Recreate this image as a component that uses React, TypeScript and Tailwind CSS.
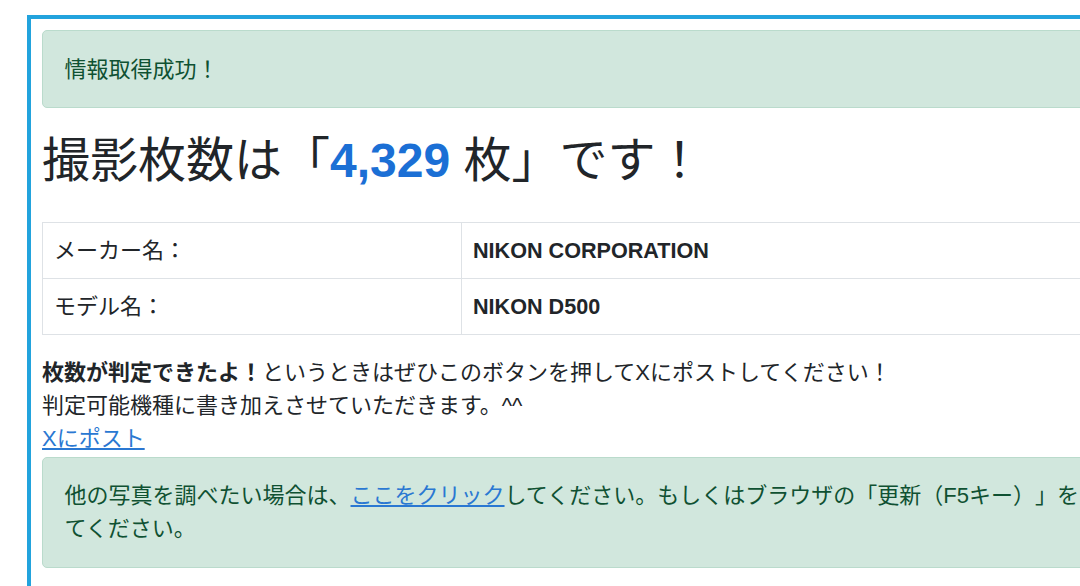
import React from "react";

export default function App() {
  return (
    <div className="w-[1080px] h-[586px] overflow-hidden bg-white font-['Liberation_Sans','Noto_Sans_CJK_JP',sans-serif] text-[#212529] [text-spacing-trim:space-all]">
      <div className="mt-[15px] ml-[27px] w-[1120px] border-4 border-[#22a3dd] p-[11px]">
        <div className="rounded-[5px] border border-[#badbcc] bg-[#d1e7dd] px-[21.5px] py-[21.5px] text-[22px] leading-[33px] text-[#0f5132]">
          情報取得成功！
        </div>

        <h1 className="mt-[24px] text-[48px] leading-[57.6px] font-normal">
          撮影枚数は「<span className="font-bold text-[#1b6fd5]">4,329</span> 枚」です！
        </h1>

        <table className="mt-[32.4px] w-full border-collapse border border-[#dee2e6] text-[22px] leading-[33px]">
          <tbody>
            <tr>
              <td className="w-[419px] border border-[#dee2e6] px-[11px] py-[11px]">メーカー名：</td>
              <td className="border border-[#dee2e6] px-[11px] py-[11px] font-bold text-[21.6px]">NIKON CORPORATION</td>
            </tr>
            <tr>
              <td className="w-[419px] border border-[#dee2e6] px-[11px] py-[11px]">モデル名：</td>
              <td className="border border-[#dee2e6] px-[11px] py-[11px] font-bold text-[21.6px]">NIKON D500</td>
            </tr>
          </tbody>
        </table>

        <p className="mt-[21.5px] text-[22px] leading-[33px]">
          <b className="font-bold">枚数が判定できたよ！</b>というときはぜひこのボタンを押してXにポストしてください！
          <br />
          判定可能機種に書き加えさせていただきます。^^
          <br />
          <a href="#" className="text-[#2a78d2] underline">Xにポスト</a>
        </p>

        <div className="mt-[1.5px] rounded-[5px] border border-[#badbcc] bg-[#d1e7dd] px-[21.5px] py-[21.5px] text-[22px] leading-[33px] text-[#0f5132]">
          他の写真を調べたい場合は、<a href="#" className="text-[#2a78d2] underline">ここをクリック</a>してください。もしくはブラウザの「更新（F5キー）」をしてください。
        </div>
        <div className="h-[40px]"></div>
      </div>
    </div>
  );
}
